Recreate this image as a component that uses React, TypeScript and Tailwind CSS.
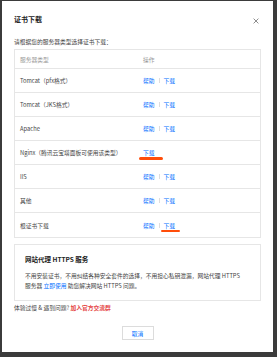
import React from "react";

const rows: { name: string; help: boolean; mark?: "left" | "right" }[] = [
  { name: "Tomcat（pfx格式）", help: true },
  { name: "Tomcat（JKS格式）", help: true },
  { name: "Apache", help: true },
  { name: "Nginx（腾讯云宝塔面板可使用该类型）", help: false, mark: "left" },
  { name: "IIS", help: true },
  { name: "其他", help: true },
  { name: "根证书下载", help: true, mark: "right" },
];

export default function App() {
  return (
    <div
      className="w-[277px] h-[357px] bg-[#3b3b3b] pl-[2px] pt-[1px] overflow-hidden"
      style={{ fontFamily: '"Noto Sans CJK SC", "Liberation Sans", sans-serif' }}
    >
      <div className="w-[271px] h-[351px] bg-white flex flex-col px-[12px] text-[5.75px] leading-[9px] text-[#444]">
        <div className="flex items-center justify-between pt-[13px] h-[23px]">
          <span className="text-[7px] leading-[10px] font-bold text-[#222]">证书下载</span>
          <svg width="6" height="6" viewBox="0 0 10 10" className="mr-[2px] mt-[3px]">
            <path d="M1 1L9 9M9 1L1 9" stroke="#777" strokeWidth="1.4" />
          </svg>
        </div>
        <div className="mt-[13px] h-[9px]">请根据您的服务器类型选择证书下载：</div>
        <div className="mt-[3px] border border-[#e6e6e6]">
          <div className="flex h-[19px] items-center text-[#999] border-b border-[#e6e6e6]">
            <div className="w-[128px] pl-[5px]">服务器类型</div>
            <div>操作</div>
          </div>
          {rows.map((r, i) => (
            <div
              key={i}
              className={`flex items-center h-[24px] ${i < rows.length - 1 ? "border-b border-[#e6e6e6]" : ""}`}
            >
              <div className="w-[128px] pl-[5px] whitespace-nowrap">{r.name}</div>
              <div className="flex items-center text-[#006eff]">
                {r.help && (
                  <>
                    <span>帮助</span>
                    <span className="mx-[4px] w-px h-[5px] bg-[#ddd]" />
                  </>
                )}
                <span className="relative">
                  下载
                  {r.mark === "left" && (
                    <span className="absolute left-[-4px] top-[9px] w-[24px] h-[2.5px] rounded-full bg-[#ff4d0a]" />
                  )}
                  {r.mark === "right" && (
                    <span className="absolute left-[-3px] top-[9px] w-[19px] h-[2.5px] rounded-full bg-[#ff4d0a]" />
                  )}
                </span>
              </div>
            </div>
          ))}
        </div>
        <div className="mt-[6px] border border-[#e6e6e6] px-[10px] pt-[9px] h-[57px]">
          <div className="text-[6.5px] leading-[10px] font-bold text-[#222]">网站代理 HTTPS 服务</div>
          <div className="mt-[7px] leading-[9.5px] whitespace-nowrap">
            <div>不用安装证书，不用纠结各种安全套件的选择，不用担心私钥泄漏，网站代理 HTTPS</div>
            <div>
              服务器 <span className="text-[#006eff]">立即使用</span> 助您解决网站 HTTPS 问题。
            </div>
          </div>
        </div>
        <div className="mt-[2px] h-[9px]">
          体验过慢 &amp; 遇到问题? <span className="text-[#e54545] font-bold">加入官方交流群</span>
        </div>
        <div className="flex justify-center mt-[14px]">
          <div className="w-[32px] h-[14px] border border-[#dcdcdc] flex items-center justify-center text-[#006eff]">
            取消
          </div>
        </div>
      </div>
    </div>
  );
}
